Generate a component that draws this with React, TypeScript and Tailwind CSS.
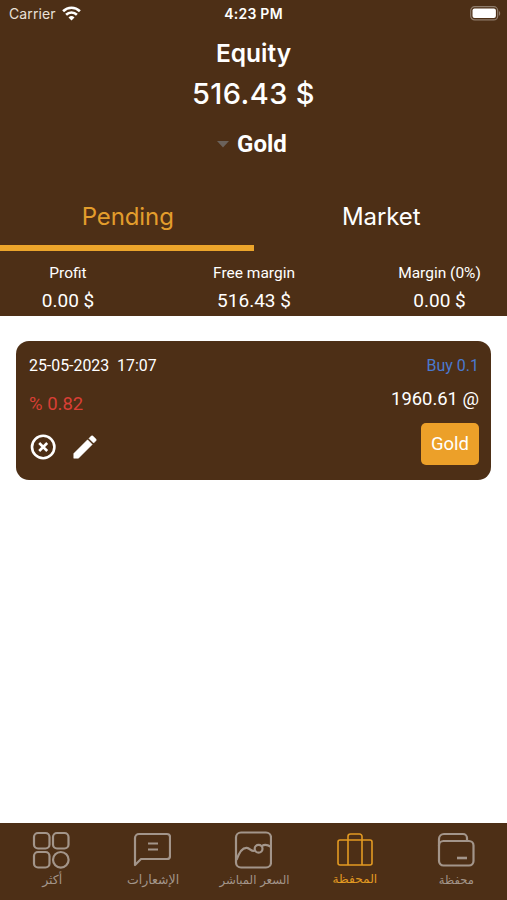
import type { ReactNode } from "react"

const stats = [
  { label: "Profit", value: "0.00 $", width: "w-[136px]" },
  { label: "Free margin", value: "516.43 $", width: "w-[236px]" },
  { label: "Margin (0%)", value: "0.00 $", width: "w-[135px]" },
]

function StatusBar() {
  return (
    <div className="grid h-[27px] grid-cols-3 items-center px-[9px] font-['Inter',sans-serif] text-white">
      <div className="flex items-center gap-[6px]">
        <span className="text-[14px] leading-none tracking-[0.1px] text-[#e9e0d8]">Carrier</span>
        <svg width="19" height="15" viewBox="0 0 19 15" fill="none" stroke="white" strokeWidth="2.6">
          <path d="M1.1 5.2a12 12 0 0 1 16.8 0" />
          <path d="M4.1 8.7a7.7 7.7 0 0 1 10.8 0" />
          <path d="M9.5 14.4 6.5 11.4a4.3 4.3 0 0 1 6 0Z" fill="white" stroke="none" />
        </svg>
      </div>
      <span className="whitespace-nowrap pt-px text-center text-[14px] font-semibold leading-none tracking-[0.25px]">4:23 PM</span>
      <svg className="-mr-[3px] justify-self-end" width="31" height="15" viewBox="0 0 31 15">
        <rect x="0.7" y="0.7" width="27" height="13.2" rx="4" fill="none" stroke="#8f7c6b" strokeWidth="1.2" />
        <rect x="2.5" y="2.5" width="23.4" height="9.6" rx="2" fill="white" />
        <path d="M29 5v4.8c1.6-.7 1.6-4.1 0-4.8Z" fill="#8f7c6b" />
      </svg>
    </div>
  )
}

function Header() {
  return (
    <header className="flex h-[316px] flex-col bg-[#4d2f16] text-white">
      <StatusBar />
      <div className="flex h-[157px] flex-col items-center font-['Inter',sans-serif]">
        <h1 className="mt-[9px] text-[24.5px] font-semibold leading-[34px]">Equity</h1>
        <p className="mt-[6px] text-[29px] font-medium leading-[36px] tracking-[0.4px]">516.43 $</p>
        <button className="mt-[15px] flex items-center gap-[8px] pr-[3px]">
          <svg width="12" height="7" viewBox="0 0 12 7" fill="#6b625b">
            <path d="M0 0h12L6 6.5Z" />
          </svg>
          <span className="font-['Roboto',sans-serif] text-[24px] font-bold leading-[34px]">Gold</span>
        </button>
      </div>
      <div className="grid h-[67px] grid-cols-2 font-['Inter',sans-serif] text-[24px]">
        <button className="h-[67px] border-b-[6px] border-[#eca52b] pl-[2px] pt-[5px] leading-[56px] tracking-[-0.1px] text-[#e39d2c]">Pending</button>
        <button className="h-[67px] border-b-[6px] border-transparent pl-[2px] pt-[5px] leading-[56px] tracking-[-0.1px]">Market</button>
      </div>
      <div className="flex pt-[11px] text-center font-['Roboto',sans-serif]">
        {stats.map((stat) => (
          <div key={stat.label} className={stat.width}>
            <p className="text-[15.5px] leading-[22px]">{stat.label}</p>
            <p className="mt-[4px] text-[19px] leading-[26px]">{stat.value}</p>
          </div>
        ))}
      </div>
    </header>
  )
}

function OrderCard() {
  return (
    <article className="mx-4 mt-[25px] flex h-[139px] justify-between rounded-[13px] bg-[#4d2f16] pl-[13px] pr-[12px] font-['Roboto',sans-serif] text-white">
      <div className="flex flex-col items-start">
        <p className="mt-[14px] whitespace-pre text-[15.9px] leading-[22px]">25-05-2023  17:07</p>
        <p className="mt-[14px] text-[18.5px] leading-[26px] text-[#d93f35]">% 0.82</p>
        <div className="mt-[15px] flex items-center gap-[12px]">
          <svg className="ml-[1px]" width="28" height="30" viewBox="0 0 28 30" fill="none" stroke="white" strokeWidth="2.6">
            <circle cx="13.2" cy="15" r="11.2" />
            <path d="m9.2 11 8 8m0-8-8 8" />
          </svg>
          <svg width="30" height="30" viewBox="0 0 24 24" fill="white" stroke="white" strokeWidth="0.4">
            <path d="M3 17.25V21h3.75L17.81 9.94l-3.75-3.75L3 17.25ZM20.71 7.04a1 1 0 0 0 0-1.41l-2.34-2.34a1 1 0 0 0-1.41 0l-1.83 1.83 3.75 3.75 1.83-1.83Z" />
          </svg>
        </div>
      </div>
      <div className="flex flex-col items-end">
        <p className="mt-[14px] text-[16px] leading-[22px] text-[#4a79cf]">Buy 0.1</p>
        <p className="mt-[9px] text-[18.4px] leading-[26px]">1960.61 @</p>
        <span className="mt-[11px] flex h-[42px] w-[58px] items-center justify-center rounded-[5px] bg-[#eca029] pt-[2px] text-[18.5px]">Gold</span>
      </div>
    </article>
  )
}

function NavItem({ label, active, className, children }: { label: string; active?: boolean; className: string; children: ReactNode }) {
  return (
    <button className={`flex flex-col items-center pt-[8px] ${active ? "text-[#e39a22]" : "text-[#a3958a]"}`}>
      <svg width="38" height="38" viewBox="0 0 38 38" fill="none" stroke="currentColor" strokeWidth="2.2" strokeLinejoin="round">
        {children}
      </svg>
      <span dir="rtl" className={`whitespace-nowrap font-['DejaVu_Sans',sans-serif] leading-[20px] ${className}`}>{label}</span>
    </button>
  )
}

function BottomNav() {
  return (
    <nav className="grid h-[77px] grid-cols-5 bg-[#4d2f16]">
      <NavItem label="أكثر" className="mt-[1px] pl-[3px] text-[12.5px]">
        <rect x="2" y="2" width="15.5" height="15.5" rx="4" />
        <rect x="21" y="2" width="15.5" height="15.5" rx="4" />
        <rect x="2" y="21" width="15.5" height="15.5" rx="4" />
        <circle cx="28.8" cy="28.8" r="7.8" />
      </NavItem>
      <NavItem label="الإشعارات" className="mt-[1px] pl-[2px] text-[12.5px]">
        <path d="M2 34V7a4 4 0 0 1 4-4h28a3 3 0 0 1 3 3v19a3 3 0 0 1-3 3H8l-6 6Z" />
        <path d="M15 12.5h10m-10 6h10" />
      </NavItem>
      <NavItem label="السعر المباشر" className="mt-[1px] pl-[2px] text-[11.7px]">
        <rect x="2" y="1.5" width="35" height="35" rx="5" />
        <path d="M2.5 29C5 21.5 9 16.5 12.8 16.8c3.4.3 4.8 4.5 8 2.8M27.8 15.2c2.4-1.8 5.8-1.4 9 .6" />
        <circle cx="24.6" cy="17.8" r="3.9" />
      </NavItem>
      <NavItem label="المحفظة" active className="text-[12.2px]">
        <g strokeWidth="1.6">
          <rect x="2" y="9" width="34" height="25" rx="2" />
          <path d="M12 34V5.5A2.5 2.5 0 0 1 14.5 3h9A2.5 2.5 0 0 1 26 5.5V34" />
        </g>
      </NavItem>
      <NavItem label="محفظة" className="mt-[1px] text-[11.5px]">
        <rect x="2" y="10" width="34.5" height="24.5" rx="4.5" />
        <path d="M2 15V8a5 5 0 0 1 5-5h19a4 4 0 0 1 4 4v3" />
        <path d="M20 27h10" strokeWidth="2.6" />
      </NavItem>
    </nav>
  )
}

export default function App() {
  return (
    <div className="flex h-[900px] w-[507px] flex-col overflow-hidden bg-white">
      <Header />
      <main className="flex-1">
        <OrderCard />
      </main>
      <BottomNav />
    </div>
  )
}
